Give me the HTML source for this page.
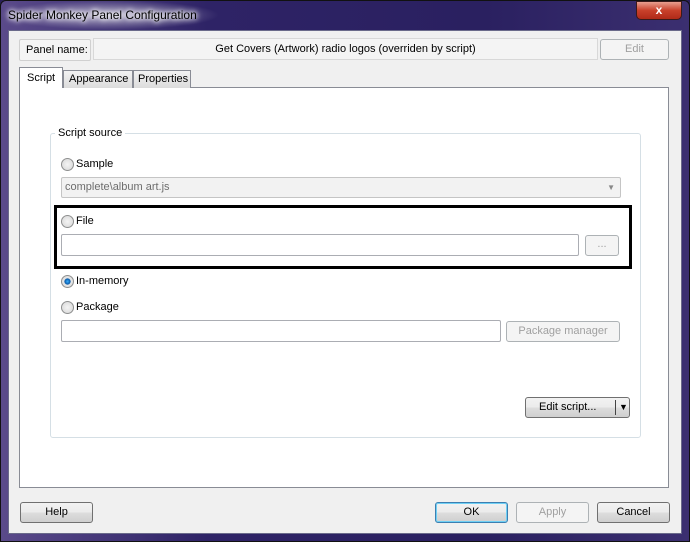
<!DOCTYPE html>
<html><head><style>
*{box-sizing:border-box;margin:0;padding:0}
body{width:690px;height:542px;overflow:hidden;font-family:"Liberation Sans",sans-serif;font-size:11px;color:#000;position:relative;background:#2a1f5a}
.frame{position:absolute;left:0;top:0;width:690px;height:542px;background:linear-gradient(90deg,#5a4a8a 0%,#2e2366 30%,#2a2060 70%,#3b2f70 100%);border:1px solid #111;border-radius:6px 6px 0 0}
.title{position:absolute;left:8px;top:8px;font-size:12px;color:#000;text-shadow:0 0 8px #fff,0 0 6px #fff,0 0 4px #fff}
.glow{position:absolute;left:0;top:0;width:220px;height:30px;background:radial-gradient(ellipse at center,rgba(255,255,255,.6),rgba(255,255,255,0) 70%)}
.close{position:absolute;left:636px;top:1px;width:46px;height:19px;background:linear-gradient(#e8a090,#c8402a 50%,#b02a18);border:1px solid #3a1a1a;border-radius:0 0 5px 5px;color:#fff;font-weight:bold;text-align:center;font-size:12px;line-height:16px}
.client{position:absolute;left:8px;top:30px;width:674px;height:504px;background:#f0f0f0;border:1px solid #6a6a8a}
.abs{position:absolute;white-space:nowrap}
.btn{position:absolute;border:1px solid #707070;border-radius:3px;background:linear-gradient(#f2f2f2 0%,#ebebeb 50%,#dddddd 51%,#cfcfcf 100%);text-align:center;font-size:11px;white-space:nowrap}
.dis{border-color:#adb2b5;background:#f4f4f4;color:#a0a0a0}
.edit{position:absolute;background:#fff;border:1px solid #abadb3;border-radius:2px}
.radio{position:absolute;width:13px;height:13px;border-radius:50%;border:1px solid #8e8f8f;background:radial-gradient(#f4f4f4,#d6d6d6)}
.lbl{position:absolute;font-size:11px;white-space:nowrap}
</style></head><body>
<div class="frame"></div>
<div class="glow"></div>
<div class="title">Spider Monkey Panel Configuration</div>
<div class="close">x</div>
<div class="client"></div>
<div class="abs" style="left:19px;top:39px;width:72px;height:22px;border:1px solid #d0d0d0;border-radius:2px;background:#f4f4f4;font-size:11px;line-height:20px;padding-left:6px">Panel name:</div>
<div class="abs" style="left:93px;top:38px;width:505px;height:22px;border:1px solid #d8d8d8;background:#f4f4f4;text-align:center;font-size:11px;line-height:20px">Get Covers (Artwork) radio logos (overriden by script)</div>
<div class="btn dis" style="left:600px;top:39px;width:69px;height:21px;line-height:19px">Edit</div>
<div class="abs" style="left:19px;top:87px;width:650px;height:401px;background:#fff;border:1px solid #898c95"></div>
<div class="abs" style="left:19px;top:67px;width:44px;height:21px;background:#fff;border:1px solid #898c95;border-bottom:none;font-size:11px;padding:4px 0 0 7px">Script</div>
<div class="abs" style="left:63px;top:70px;width:70px;height:18px;background:linear-gradient(#f2f2f2,#dcdcdc);border:1px solid #898c95;border-bottom:none;font-size:11px;padding:2px 0 0 5px">Appearance</div>
<div class="abs" style="left:133px;top:70px;width:58px;height:18px;background:linear-gradient(#f2f2f2,#dcdcdc);border:1px solid #898c95;border-bottom:none;font-size:11px;padding:2px 0 0 4px">Properties</div>
<div class="abs" style="left:50px;top:133px;width:591px;height:305px;border:1px solid #d5dfe5;border-radius:3px"></div>
<div class="lbl" style="left:55px;top:127px;background:#fff;padding:0 3px">Script source</div>
<div class="radio" style="left:61px;top:158px"></div><div class="lbl" style="left:76px;top:158px">Sample</div>
<div class="abs" style="left:61px;top:177px;width:560px;height:21px;border:1px solid #c5c5c5;border-radius:2px;background:#f2f2f2;color:#6d6d6d;font-size:11px;line-height:19px;padding-left:3px">complete\album art.js<span style="position:absolute;right:5px;top:0;font-size:8px;color:#888">▼</span></div>
<div class="abs" style="left:54px;top:205px;width:578px;height:64px;border:3px solid #000"></div>
<div class="radio" style="left:61px;top:215px"></div><div class="lbl" style="left:76px;top:215px">File</div>
<div class="edit" style="left:61px;top:234px;width:518px;height:22px"></div>
<div class="btn dis" style="left:585px;top:235px;width:34px;height:21px;line-height:17px">...</div>
<div class="radio" style="left:61px;top:275px;background:radial-gradient(#3ab0ff 0,#0a5aa8 35%,#e8e8e8 45%,#d0d0d0)"></div><div class="lbl" style="left:76px;top:275px">In-memory</div>
<div class="radio" style="left:61px;top:301px"></div><div class="lbl" style="left:76px;top:301px">Package</div>
<div class="edit" style="left:61px;top:320px;width:440px;height:22px"></div>
<div class="btn dis" style="left:506px;top:321px;width:114px;height:21px;line-height:19px">Package manager</div>
<div class="btn" style="left:525px;top:397px;width:105px;height:21px;line-height:19px;text-align:left;padding-left:13px">Edit script...<span style="position:absolute;left:89px;top:2px;height:15px;border-left:1px solid #444"></span><span style="position:absolute;left:93px;top:0;font-size:9px">▼</span></div>
<div class="btn" style="left:20px;top:502px;width:73px;height:21px;line-height:19px">Help</div>
<div class="btn" style="left:435px;top:502px;width:73px;height:21px;line-height:19px;border-color:#3c7fb1;box-shadow:inset 0 0 0 1px #6fd0f5">OK</div>
<div class="btn dis" style="left:516px;top:502px;width:73px;height:21px;line-height:19px">Apply</div>
<div class="btn" style="left:597px;top:502px;width:73px;height:21px;line-height:19px">Cancel</div>
</body></html>
